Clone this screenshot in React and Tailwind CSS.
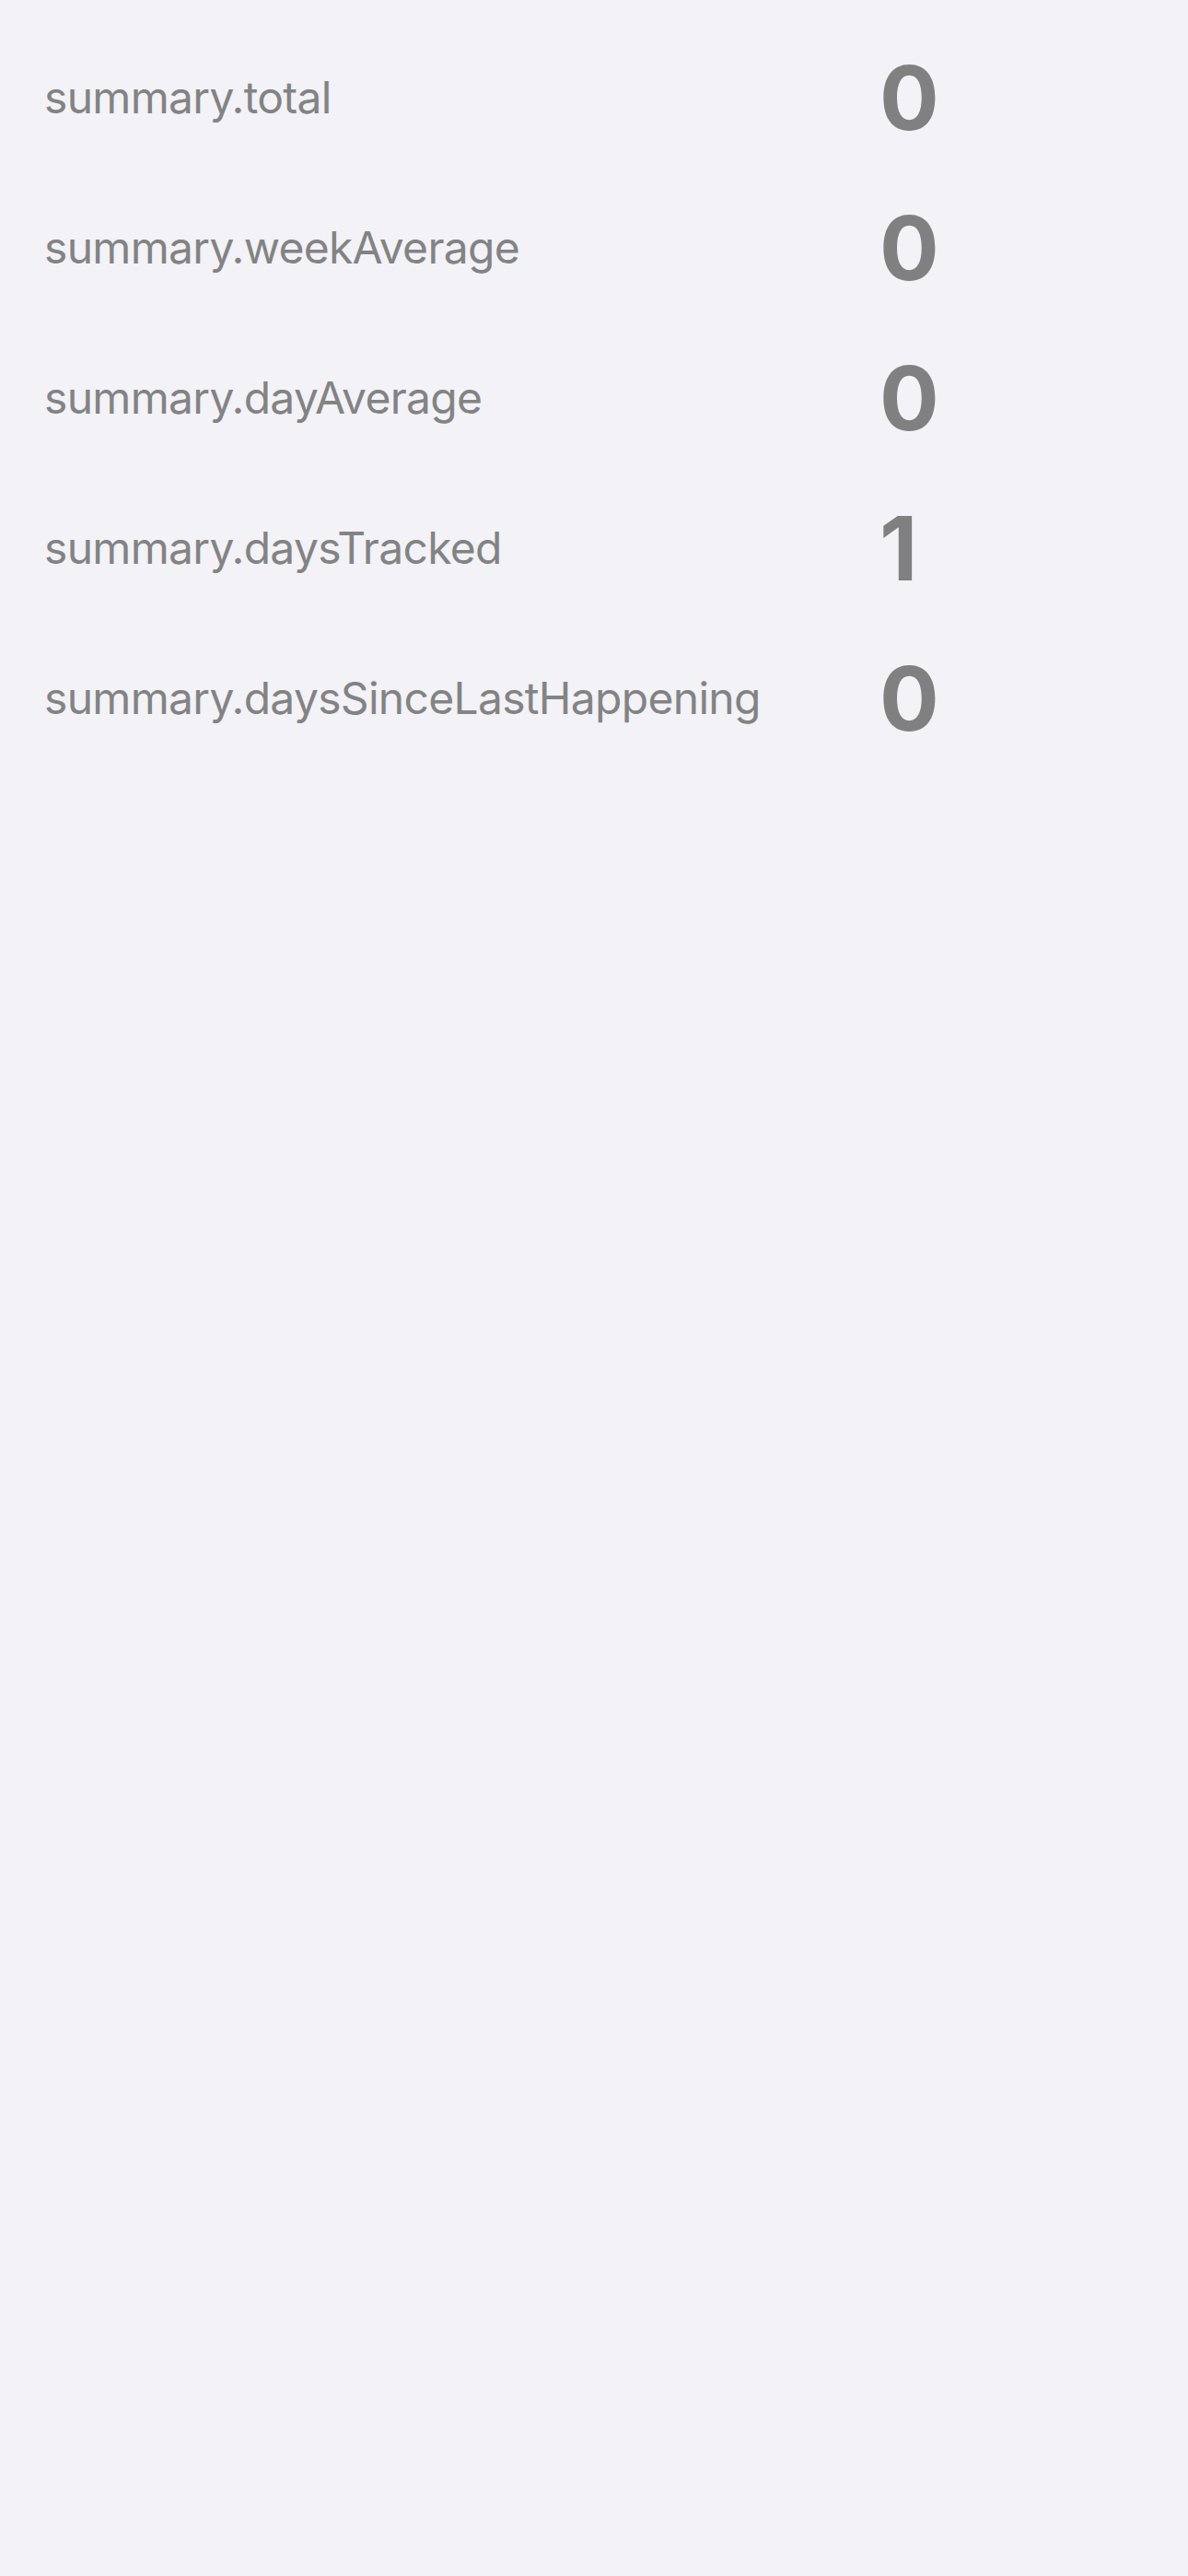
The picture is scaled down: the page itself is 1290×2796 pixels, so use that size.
export default function App() {
  const rows = [
    ["summary.total", "0"],
    ["summary.weekAverage", "0"],
    ["summary.dayAverage", "0"],
    ["summary.daysTracked", "1"],
    ["summary.daysSinceLastHappening", "0"],
  ];
  return (
    <div
      className="w-[1290px] h-[2796px] bg-[#f2f2f7] pt-[24px] pl-[48px]"
      style={{ fontFamily: "Inter, 'Noto Sans', sans-serif" }}
    >
      {rows.map(([label, value]) => (
        <div key={label} className="flex items-center h-[163px]">
          <div className="w-[907px] text-[48px] text-[#838383] tracking-[-0.7px] leading-none">
            {label}
          </div>
          <div className="text-[96px] font-bold text-[#808080] leading-none">
            {value}
          </div>
        </div>
      ))}
    </div>
  );
}
